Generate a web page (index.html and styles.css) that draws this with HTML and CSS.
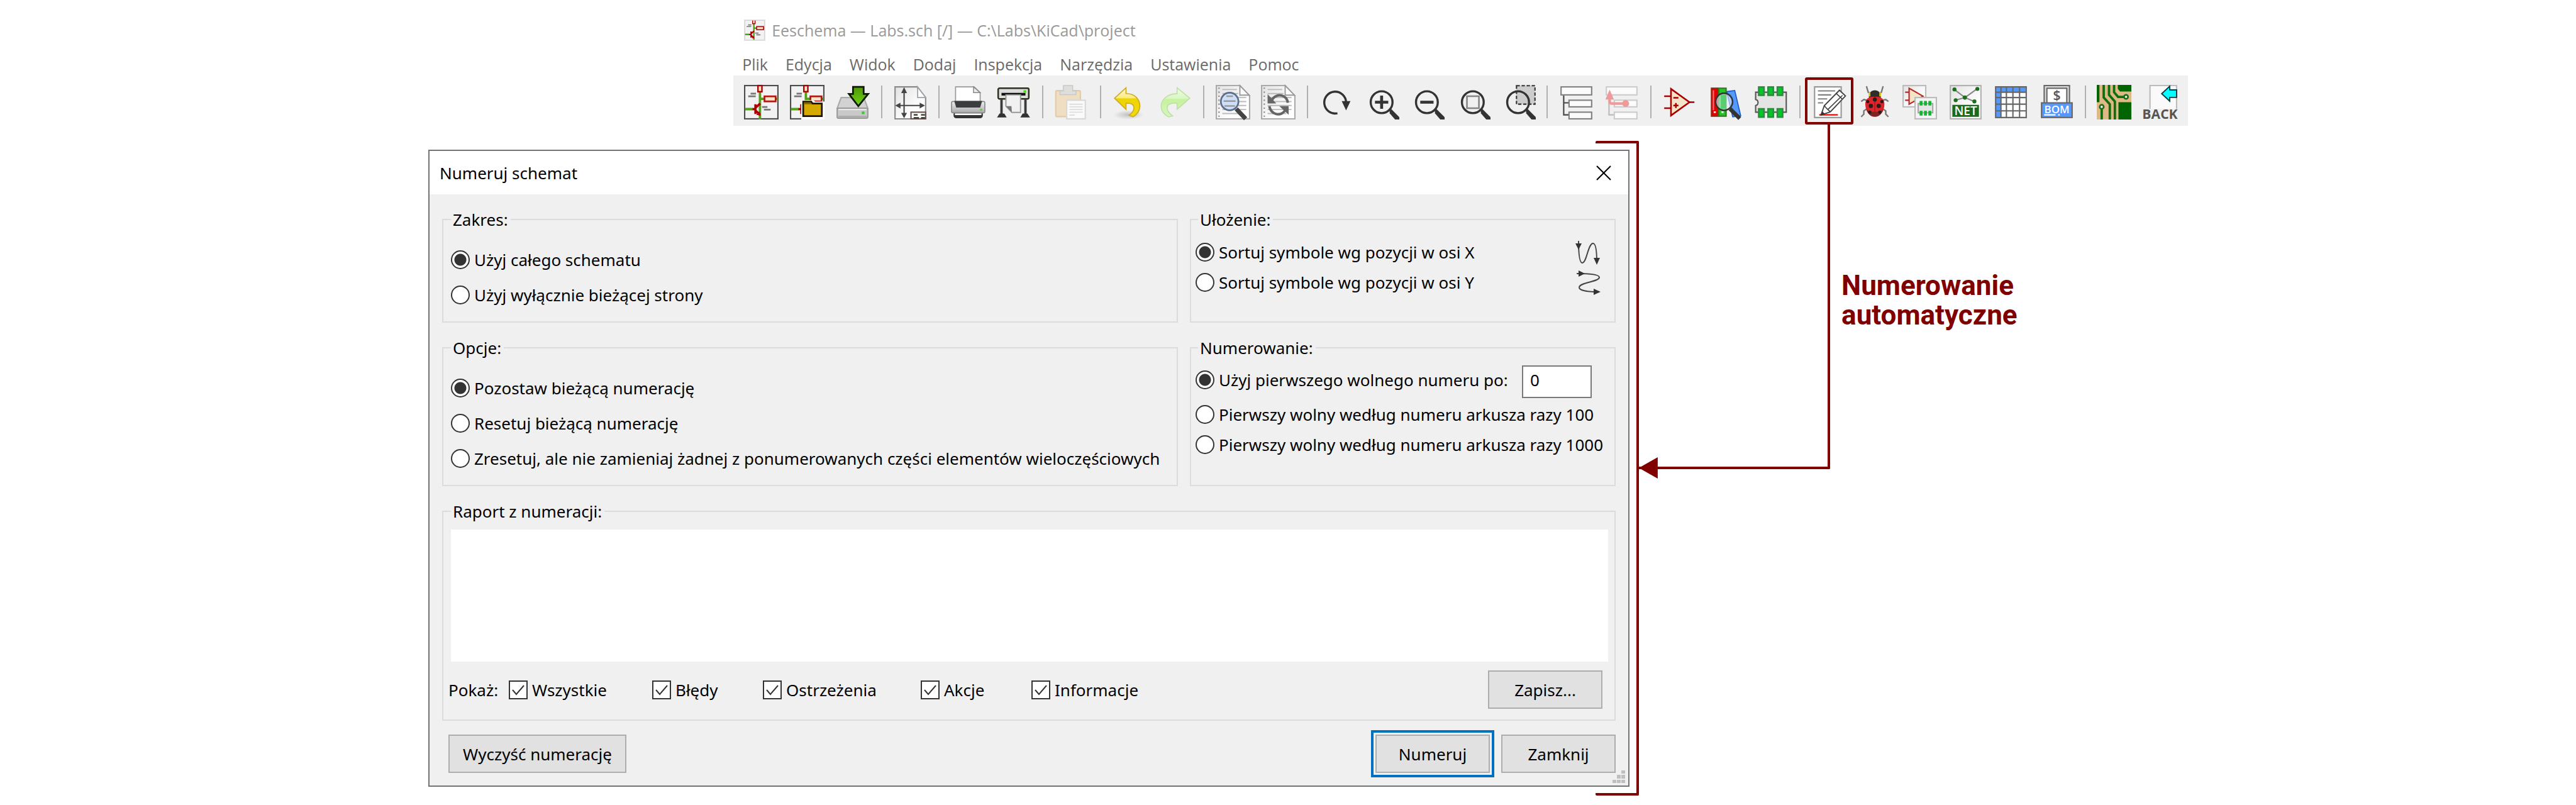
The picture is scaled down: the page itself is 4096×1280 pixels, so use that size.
FILE: index.html
```html
<!DOCTYPE html>
<html lang="pl">
<head>
<meta charset="utf-8">
<title>Numerowanie automatyczne</title>
<link rel="stylesheet" href="styles.css">
</head>
<body>
<svg class="defs" aria-hidden="true">
  <defs>
    <linearGradient id="g-paper" x1="0" y1="0" x2="1" y2="1"><stop offset="0" stop-color="#e2e2e2"/><stop offset=".7" stop-color="#fff"/></linearGradient>
    <linearGradient id="g-green" x1="0" y1="0" x2="0" y2="1"><stop offset="0" stop-color="#4e9a06"/><stop offset="1" stop-color="#73d216"/></linearGradient>
    <linearGradient id="g-yellow" x1="0" y1="0" x2="0" y2="1"><stop offset="0" stop-color="#fffbd0"/><stop offset=".34" stop-color="#fbec80"/><stop offset=".38" stop-color="#edd400"/><stop offset="1" stop-color="#f0dc10"/></linearGradient>
    <linearGradient id="g-lime" x1="0" y1="0" x2="0" y2="1"><stop offset="0" stop-color="#edfce2"/><stop offset=".36" stop-color="#d9f7c4"/><stop offset=".4" stop-color="#c6f29e"/><stop offset="1" stop-color="#d6f7bc"/></linearGradient>
    <linearGradient id="g-metal" x1="0" y1="0" x2="0" y2="1"><stop offset="0" stop-color="#eee"/><stop offset="1" stop-color="#aaa"/></linearGradient>
    <radialGradient id="g-shadow"><stop offset="0" stop-color="#000" stop-opacity=".2"/><stop offset="1" stop-color="#000" stop-opacity="0"/></radialGradient>
    <g id="sch">
      <rect x=".5" y=".5" width="25" height="25" fill="#f2f2f2" stroke="#4d4d4d"/>
      <path d="M12 5v21M12 10.5h4M23 10.5h2.5M.8 18.2h6" stroke="#55a019" stroke-width="1.8" fill="none"/>
      <rect x="10.5" y=".5" width="3" height="4.6" fill="#f5e4c8" stroke="#a80000" stroke-width="1.1"/>
      <rect x="15.4" y="8.6" width="8.4" height="3.8" fill="#f5e4c8" stroke="#b01818" stroke-width="1.3"/>
      <path d="M5 6.6h4M3.2 8.6h5.6M13.6 16.6h4M15 18.6h5" stroke="#777" stroke-width="1.3"/>
      <path d="M8.6 14.5v7.4M6.4 18.2h2M8.8 17l3.4-3M8.8 19.4l3.2 3" stroke="#a80000" stroke-width="1.7" fill="none"/>
      <path d="M12.6 23.2l-3.4-.8 2.4-2.6z" fill="#a80000"/>
    </g>
    <g id="sheet">
      <path d="M.5.5h17.7l7.3 7.8v17.2H.5z" fill="url(#g-paper)" stroke="#aaa"/>
      <path d="M18.2.5v7.2h7z" fill="#fff" stroke="#999" stroke-width=".9"/>
      <path d="M2.5 2v23" stroke="#888" stroke-width="1" stroke-dasharray="1 2"/>
      <path d="M5 3.5h11M5 6.500h12M5 9.500h18M5 12.500h18M5 15.500h18M5 18.500h18M5 21.500h14" stroke="#bbb" stroke-width=".9"/>
    </g>
    <g id="lens">
      <circle cx="12.700" cy="13" r="8.200" fill="none" stroke="#333" stroke-width="1.600"/>
      <path d="M18.600 19l1.400-.800 6 6v1.800h-3.200l-4-4.600z" fill="#333"/>
    </g>
  </defs>
</svg>

<main class="page">
  <section class="editor" aria-label="Eeschema">
    <header class="editor-title">
      <svg class="app-icon" viewBox="0 0 26 26" aria-hidden="true"><use href="#sch"/><rect x=".5" y=".5" width="25" height="25" fill="none" stroke="#e2e2e2" stroke-width="1.500"/></svg>
      <h1>Eeschema — Labs.sch [/] — C:\Labs\KiCad\project</h1>
    </header>
    <nav class="menu">
      <a href="#">Plik</a><a href="#">Edycja</a><a href="#">Widok</a><a href="#">Dodaj</a><a href="#">Inspekcja</a><a href="#">Narzędzia</a><a href="#">Ustawienia</a><a href="#">Pomoc</a>
    </nav>
    <div class="toolbar" role="toolbar">
      <button class="tool" aria-label="Nowy schemat"><svg viewBox="0 0 26 26"><use href="#sch"/></svg></button>
      <button class="tool" aria-label="Otwórz"><svg viewBox="0 0 26 26"><use href="#sch"/><path d="M8.500 11.500h9l1.500 1h7V26H8.500z" fill="#fff"/><path d="M10 12.600h6l1 1.400h7v9.500H10z" fill="#d4aa00" stroke="#1a1400" stroke-width="1.300"/><path d="M10.600 13h5l1 1.500h-6z" fill="#806600"/></svg></button>
      <button class="tool" aria-label="Zapisz"><svg viewBox="0 0 26 26"><path d="M4.500 9.500h17l3 8h-23z" fill="#d2d2d2" stroke="#aaa"/><rect x="1.500" y="17.500" width="23" height="7.500" rx="1" fill="#c9c9c9" stroke="#999"/><path d="M2.500 18.500h21" stroke="#e8e8e8"/><path d="M2.500 23.700h21" stroke="#aaa"/><rect x="20" y="20" width="2" height="2" fill="#3c3"/><path d="M13.400 1.500h8v5.300h3.400L17.400 16 10.300 6.800h3.100z" fill="url(#g-green)" stroke="#0b1a00" stroke-width="1.300"/></svg></button>
      <span class="sep"></span>
      <button class="tool" aria-label="Ustawienia strony"><svg viewBox="0 0 26 26"><path d="M1.500 1.500h16.800l6.200 8v16h-23z" fill="url(#g-paper)" stroke="#8a8a8a"/><path d="M18.300 1.500c.4 4 .2 7 .2 8h6z" fill="#fff" stroke="#9aa4a8" stroke-width=".8"/><path d="M8.300 3v21M3 15.500h20" stroke="#444" stroke-width="1"/><path d="M8.300 1.800l2.200 4.400H6.100zM8.300 25l2.200-4H6.100zM1.600 15.500l4-2.200v4.400zM24 15.500l-4-2.200v4.400z" fill="#444"/><rect x="13.500" y="20.500" width="11" height="5" fill="#fff" stroke="#6b5050"/><path d="M15.500 22.500h3m2.500 0h3M15.500 24.700h4m1.500 0h3" stroke="#2a3320"/></svg></button>
      <span class="sep"></span>
      <button class="tool" aria-label="Drukuj"><svg viewBox="0 0 26 26"><path d="M3.500 13V1.500h14l4.500 4.300V13z" fill="#fff" stroke="#999" stroke-width=".8"/><path d="M17 1.500v4.300h5z" fill="#eee" stroke="#888" stroke-width=".7"/><rect x="2" y="20" width="22" height="5" rx="2" fill="#333"/><path d="M3 22h20" stroke="#fff" stroke-width="1.300"/><rect x=".5" y="12.500" width="25" height="8.500" rx="1" fill="url(#g-metal)" stroke="#8a8a8a" stroke-width=".8"/><path d="M2.500 12h21l-1.500 5H4z" fill="#3a3e3e"/><rect x="22" y="18" width="1.500" height="1.300" fill="#4d1"/></svg></button>
      <button class="tool" aria-label="Rysuj"><svg viewBox="0 0 26 26"><path d="M4 11v12M22 11v12" stroke="#3a3a3a" stroke-width="1.800"/><path d="M1.500 24l1.300-2h3l1.200 2zM19 24l1.200-2h3l1.300 2z" fill="#333" stroke="#333"/><rect x="1.500" y="2.500" width="23" height="8" rx="1" fill="#dcdcdc" stroke="#2e2e1e" stroke-width="1.200"/><rect x="4" y="6" width="18" height="2" fill="#111"/><rect x="20.500" y="4" width="2" height="2" fill="#4d1"/><path d="M7.300 7.500h11v13.200h-6.500L7.300 16z" fill="#f1f1f1" stroke="#999" stroke-width=".9"/><path d="M7.300 16h4.200l.3 4.700z" fill="#777"/></svg></button>
      <span class="sep"></span>
      <button class="tool" aria-label="Wklej"><svg viewBox="0 0 26 26"><rect x="1.300" y="4.300" width="18.500" height="19.500" rx="1" fill="#f0dec2" stroke="#e2cba8"/><path d="M7 .5h7v4h2.500v2.800h-12V4.500H7z" fill="#dededa" stroke="#c8c8c6" stroke-width=".7"/><rect x="9.500" y="11.500" width="14" height="14" fill="#fafafa" stroke="#d8d8d8"/><path d="M11.500 14.500h10M11.500 16.500h10M11.500 18.500h10M11.500 20.500h10M11.500 22.700h4" stroke="#ddd" stroke-width=".9"/></svg></button>
      <span class="sep"></span>
      <button class="tool" aria-label="Cofnij"><svg viewBox="0 0 26 26"><ellipse cx="12.500" cy="22.500" rx="11.500" ry="3.500" fill="url(#g-shadow)"/><path d="M2 10l8.600-7.800v4.300C17.500 6.500 21 11 21 16c0 3.500-2.300 6.300-5 8l-3.100-1.200c2.800-2 4-3.800 3.600-6.300-.4-2.200-2.600-3-5.900-2.700v4.600z" fill="url(#g-yellow)" stroke="#cfa92a" stroke-width=".8"/></svg></button>
      <button class="tool" aria-label="Ponów"><svg viewBox="0 0 26 26"><path d="M24 10l-9.500-7.800v4.500C7.500 6.500 2.500 11 2.500 16c0 3.500 2.300 6.300 5.500 8l3.100-.7c-2.800-2.200-4.400-4-4-6.800.4-2.200 3.600-3.200 7.400-2.700v4.600z" fill="url(#g-lime)" stroke="#bfe0a8" stroke-width=".8"/></svg></button>
      <span class="sep"></span>
      <button class="tool" aria-label="Znajdź"><svg viewBox="0 0 26 26"><use href="#sheet"/><circle cx="10.500" cy="12.500" r="6.600" fill="#cfdff8" stroke="#5c6e8c" stroke-width="1.300"/><path d="M8 8.500h5M6 12.200h9M6.500 15.800h8" stroke="#999" stroke-width="1.200"/><path d="M15.500 18l7 7.500" stroke="#444" stroke-width="3.300"/></svg></button>
      <button class="tool" aria-label="Zamień"><svg viewBox="0 0 26 26"><use href="#sheet"/><path d="M7.500 12.800c1.500-4 5-5.600 8-4.800 3 .8 4.400 3 4.700 5.500M18.700 18c-1.500 3.500-4.700 4.700-7.500 3.800-2.700-.8-4.400-3-4.900-5.800" fill="none" stroke="#666" stroke-width="1.900"/><path d="M5 7v7h6.500zM20.800 16h-7l7 6.500z" fill="#666"/></svg></button>
      <span class="sep"></span>
      <button class="tool" aria-label="Odśwież"><svg viewBox="0 0 26 26"><path d="M14 21.300a8.200 8.200 0 1 1 6.500-8" fill="none" stroke="#333" stroke-width="1.600"/><path d="M17.200 12.200h6.600l-3.300 7z" fill="#333"/></svg></button>
      <button class="tool" aria-label="Powiększ"><svg viewBox="0 0 26 26"><use href="#lens"/><path d="M12.700 8v10M7.700 13h10" stroke="#333" stroke-width="2.200"/></svg></button>
      <button class="tool" aria-label="Pomniejsz"><svg viewBox="0 0 26 26"><use href="#lens"/><path d="M7.700 13h10" stroke="#333" stroke-width="2.200"/></svg></button>
      <button class="tool" aria-label="Dopasuj"><svg viewBox="0 0 26 26"><use href="#lens"/><rect x="8.300" y="8.500" width="9" height="9" fill="none" stroke="#858585" stroke-width="1.200"/></svg></button>
      <button class="tool" aria-label="Powiększ zaznaczenie"><svg viewBox="0 0 26 26"><rect x="11.500" y=".6" width="13.900" height="13.900" fill="#ccc" stroke="#333" stroke-width="1" stroke-dasharray="2.500 1.300"/><use href="#lens"/></svg></button>
      <span class="sep"></span>
      <button class="tool" aria-label="Hierarchia"><svg viewBox="0 0 26 26"><path d="M3.500 8v14.500H8M3.500 13.500H8" stroke="#444" fill="none"/><g fill="#fbfbfb" stroke="#808080"><rect x="1.500" y="1.500" width="23" height="6"/><rect x="7.500" y="11.500" width="17" height="5"/><rect x="7.500" y="20.500" width="17" height="5"/></g></svg></button>
      <button class="tool" aria-label="Opuść arkusz"><svg viewBox="0 0 26 26"><path d="M3.500 8v14.500H8" stroke="#bbb" fill="none"/><g fill="#fbfbfb" stroke="#ccc"><rect x="1.500" y="1.500" width="23" height="6"/><rect x="7.500" y="11.500" width="17" height="5"/><rect x="7.500" y="20.500" width="17" height="5"/></g><path d="M4 10v2.500q0 1.500 1.500 1.500H16" stroke="#ef9a9a" stroke-width="1.900" fill="none"/><circle cx="16" cy="14" r="2.600" fill="#ef9a9a"/><path d="M4 3.500L7.200 11H.8z" fill="#ef9a9a"/></svg></button>
      <span class="sep"></span>
      <button class="tool" aria-label="Edytor symboli"><svg viewBox="0 0 26 26"><path d="M1.500 8.500h5M1.500 17.500h5M20 13h4.200" stroke="#a80000" stroke-width="1.200"/><path d="M6.600 3v20L20.500 13z" fill="#f5e4c8" stroke="#a80000" stroke-width="1.200"/><path d="M8.400 9.700h3.800M8.400 15.500h3.800M10.300 13.600v3.800" stroke="#a80000" stroke-width="1.200"/></svg></button>
      <button class="tool" aria-label="Przeglądarka bibliotek"><svg viewBox="0 0 26 26"><path d="M14 5l6-.8 4.500 19-6 .8z" fill="#5599ff" stroke="#1a5bc0" stroke-width=".8"/><rect x="2.500" y="2.500" width="5" height="21" fill="#e00000" stroke="#8e2a1c"/><rect x="8" y="2.500" width="5.500" height="21" fill="#2ac02a" stroke="#2f7a1c"/><path d="M4 4v15" stroke="#ff6a6a"/><path d="M4.200 20.500h1.600M10 20.500h1.600" stroke="#fff" stroke-width="1.300"/><circle cx="12" cy="12.700" r="6.400" fill="#e8eefc" fill-opacity=".6" stroke="#333" stroke-width="1.200"/><path d="M9.500 7.500h4v10.400h-4z" fill="#39c85a" fill-opacity=".7"/><path d="M16.500 18l7.300 7.300" stroke="#333" stroke-width="3"/></svg></button>
      <button class="tool" aria-label="Edytor footprintów"><svg viewBox="0 0 26 26"><path d="M1.700 5.500h23v15h-23v-5c2.400-.5 2.400-4 0-4.500z" fill="#e4e4e4" stroke="#555" stroke-width="1"/><g fill="#00c828" stroke="#35883f" stroke-width="1.200"><rect x="4" y="1.600" width="4" height="6.200"/><rect x="11" y="1.600" width="4" height="6.200"/><rect x="18" y="1.600" width="4" height="6.200"/><rect x="4" y="18" width="4" height="6.200"/><rect x="11" y="18" width="4" height="6.200"/><rect x="18" y="18" width="4" height="6.200"/></g></svg></button>
      <span class="sep"></span>
      <button class="tool marked" aria-label="Numeruj schemat"><svg viewBox="0 0 26 26"><path d="M2.500 1.500h20v23h-20z" fill="#fff" stroke="#999"/><path d="M5 4.500h13M5 7.500h10M5 10.500h7M5 13.500h4" stroke="#808080"/><path d="M6 22.500h14" stroke="#f00" stroke-width="1.100"/><path d="M7.400 22.600l2.400-7L21.200 4l4.500 4.300-11.400 12z" fill="#fff" stroke="#444" stroke-width=".9"/><path d="M9.800 15.600l1.700 2 2.800 2.700M18.800 6.400l4.600 4.300M12.500 18.500l11-10.700" fill="none" stroke="#444" stroke-width=".8"/><path d="M7 23l1-3.300 2.300 2z" fill="#333"/></svg></button>
      <button class="tool" aria-label="Test ERC"><svg viewBox="0 0 26 26"><path d="M7 1l1.300 4.500L11 7M19.500 1l-1.300 4.500L15.500 7M3 12.500l2-1.500 3 .6M23.500 12.500l-2-1.500-3 .6M3 24l2-2v-2.500l3-2M23.500 24l-2-2v-2.500l-3-2" fill="none" stroke="#777" stroke-width="1.100"/><path d="M8.800 9.500c0-4 2-5.500 4.500-5.500s4.500 1.500 4.500 5.500z" fill="#2e2e2a"/><path d="M9.300 5.600v3M17.300 5.600v3M11.600 9.600h3.400" stroke="#dcc020" stroke-width="1.300"/><path d="M13.300 9c4.200-.6 7.300 1.500 7.200 5.500-.2 5.500-3 9.400-7.200 9.400s-7-3.900-7.200-9.400C6 10.500 9.100 8.400 13.300 9z" fill="#d8262a"/><path d="M7 18.500c3 2.300 9.500 2.300 12.600 0-1.300 3.500-3.500 5.400-6.300 5.400S8.300 22 7 18.500z" fill="#7d2426"/><path d="M13.300 9v14.800" stroke="#a01418" stroke-width=".6"/><g fill="#2b1a1a"><circle cx="13.300" cy="11" r="1.500"/><circle cx="8" cy="12.500" r="1.200"/><circle cx="18.600" cy="12.500" r="1.200"/><circle cx="10.300" cy="15.800" r="1.600"/><circle cx="16.200" cy="15.800" r="1.600"/><circle cx="9.500" cy="20.500" r="1.200"/><circle cx="17" cy="20.500" r="1.200"/></g></svg></button>
      <button class="tool" aria-label="Przypisz footprinty"><svg viewBox="0 0 26 26"><rect x=".5" y=".5" width="17" height="16" fill="url(#g-paper)" stroke="#bbb"/><path d="M2 5.500h3M2 11.500h3" stroke="#b82a2a"/><path d="M5 2.500v12l10.500-6z" fill="#f5e4c8" stroke="#b82a2a"/><rect x="9.500" y="9.500" width="16" height="16" fill="#f4f4f4" stroke="#bbb"/><rect x="11.800" y="14" width="11" height="7" fill="#e4e4e4" stroke="#999" stroke-width=".8"/><path d="M14 12v3.500M17.300 12v3.500M20.600 12v3.500M14 19.500V23M17.300 19.500V23M20.600 19.500V23" stroke="#12b432" stroke-width="2.200"/></svg></button>
      <button class="tool" aria-label="Generuj listę sieci"><svg viewBox="0 0 26 26"><rect x="1.500" y=".5" width="23" height="25" fill="url(#g-paper)" stroke="#b0b0b0"/><path d="M4.500 3.500l8 6 9-6.500M5.500 11.500l7-2 7 3" fill="none" stroke="#888"/><g fill="#1a701a"><circle cx="4.600" cy="3.400" r="1.500"/><circle cx="21.800" cy="3" r="1.500"/><circle cx="12.400" cy="9.500" r="1.600"/><circle cx="5.500" cy="11.500" r="1.500"/><circle cx="19.600" cy="12.400" r="1.500"/></g><rect x="3" y="15" width="20" height="9" fill="#1a6a1a"/><text class="glyph" x="13" y="22.700" font-size="9" fill="#fff" text-anchor="middle">NET</text></svg></button>
      <button class="tool" aria-label="Edytor pól"><svg viewBox="0 0 26 26"><rect x="1.500" y="1.500" width="23" height="23" fill="#fff"/><path d="M1.500 1.500h23v4H5.500v19h-4z" fill="#5599ff"/><path d="M1.500 1.500h23v23h-23zM5.500 1.500v23M9.600 1.500v23M14.500 1.500v23M19.500 1.500v23M1.500 5.500h23M1.500 9.500h23M1.500 14.500h23M1.500 19.500h23" fill="none" stroke="#666"/></svg></button>
      <button class="tool" aria-label="Lista materiałowa"><svg viewBox="0 0 26 26"><rect x="3.500" y=".5" width="19" height="14" fill="#e2e2e2" stroke="#666"/><rect x="5.500" y="2.500" width="15" height="12" fill="#fff" stroke="#666"/><text class="glyph" x="13" y="11.500" font-size="10" fill="#555" text-anchor="middle">$</text><rect x="1.500" y="13.500" width="23" height="11" fill="#5599ff" stroke="#666"/><text class="glyph" x="13" y="21.200" font-size="8" fill="#fff" text-anchor="middle">BOM</text><path d="M3.500 22.500H12M14 22.500h1.200" stroke="#fff"/></svg></button>
      <span class="sep"></span>
      <button class="tool" aria-label="Edytor PCB"><svg viewBox="0 0 26 26"><rect width="26" height="26" fill="#deb887"/><path d="M0 0h2v13H0zM15.800 0H26v5H17.500L15.800 3zM16.300 13H26v13h-9.700z" fill="#006400"/><path d="M5.200 0v9.500l4.600 5V26M9.200 0v7.500l4.400 5V26M13 0v5.500L16 9h5M3.700 17v9" fill="none" stroke="#126e0c" stroke-width="1.800"/><circle cx="22" cy="9" r="1.500" fill="#fff" stroke="#1a701a" stroke-width="1.300"/><circle cx="3.700" cy="16.500" r="1.500" fill="#fff" stroke="#1a701a" stroke-width="1.300"/></svg></button>
      <button class="tool" aria-label="Wstecz"><svg viewBox="0 0 26 26"><path d="M5.500 18V.5h20V18" fill="#fafafa" stroke="#bbb"/><path d="M14.300 6.600l6-5.600v2.800h5.200v5.600h-5.200v2.800z" fill="#0ff" stroke="#083c40" stroke-width=".9"/><text class="glyph back" x="13" y="25.600" font-size="10" fill="#555" text-anchor="middle">BACK</text></svg></button>
    </div>
  </section>

  <section class="scene">
    <form class="dialog" aria-labelledby="dialog-title">
      <header class="dialog-title">
        <h2 id="dialog-title">Numeruj schemat</h2>
        <button type="button" class="close" aria-label="Zamknij okno"><svg viewBox="0 0 24 24"><path d="M1 1l22 22M23 1L1 23" stroke="#000" stroke-width="2"/></svg></button>
      </header>
      <div class="dialog-body">
        <div class="groups">
          <fieldset class="roomy">
            <legend>Zakres:</legend>
            <label class="choice"><input type="radio" name="scope" checked>Użyj całego schematu</label>
            <label class="choice"><input type="radio" name="scope">Użyj wyłącznie bieżącej strony</label>
          </fieldset>
          <fieldset class="tight">
            <legend>Ułożenie:</legend>
            <div class="line">
              <label class="choice"><input type="radio" name="order" checked>Sortuj symbole wg pozycji w osi X</label>
              <svg class="order-icon" viewBox="0 0 40 40"><path d="M5 2c0 18 1 35 6 35C18 37 20 6 28 6c5 0 6 15 6 30" fill="none" stroke="#444" stroke-width="2"/><path d="M0 6h10L5 16zM29 29h10l-5 11z" fill="#333"/></svg>
            </div>
            <div class="line">
              <label class="choice"><input type="radio" name="order">Sortuj symbole wg pozycji w osi Y</label>
              <svg class="order-icon" viewBox="0 0 40 40"><path d="M2 6c18 0 36 1 36 6C38 19 6 20 6 28c0 5 15 7 30 7" fill="none" stroke="#444" stroke-width="2"/><path d="M5 1v10l10-5zM29 30v10l11-5z" fill="#333"/></svg>
            </div>
          </fieldset>
          <fieldset class="roomy">
            <legend>Opcje:</legend>
            <label class="choice"><input type="radio" name="mode" checked>Pozostaw bieżącą numerację</label>
            <label class="choice"><input type="radio" name="mode">Resetuj bieżącą numerację</label>
            <label class="choice"><input type="radio" name="mode">Zresetuj, ale nie zamieniaj żadnej z ponumerowanych części elementów wieloczęściowych</label>
          </fieldset>
          <fieldset class="tight">
            <legend>Numerowanie:</legend>
            <div class="start">
              <label class="choice"><input type="radio" name="start" checked>Użyj pierwszego wolnego numeru po:</label>
              <input class="number" type="text" value="0" aria-label="Pierwszy numer">
            </div>
            <label class="choice"><input type="radio" name="start">Pierwszy wolny według numeru arkusza razy 100</label>
            <label class="choice"><input type="radio" name="start">Pierwszy wolny według numeru arkusza razy 1000</label>
          </fieldset>
        </div>
        <fieldset class="report">
          <legend>Raport z numeracji:</legend>
          <textarea aria-label="Raport z numeracji" readonly></textarea>
          <div class="filters">
            <span>Pokaż:</span>
            <label class="choice"><input type="checkbox" checked>Wszystkie</label>
            <label class="choice"><input type="checkbox" checked>Błędy</label>
            <label class="choice"><input type="checkbox" checked>Ostrzeżenia</label>
            <label class="choice"><input type="checkbox" checked>Akcje</label>
            <label class="choice"><input type="checkbox" checked>Informacje</label>
            <button type="button" class="btn">Zapisz...</button>
          </div>
        </fieldset>
        <footer class="actions">
          <button type="button" class="btn wide">Wyczyść numerację</button>
          <button type="button" class="btn primary">Numeruj</button>
          <button type="button" class="btn">Zamknij</button>
        </footer>
      </div>
      <svg class="grip" viewBox="0 0 20 20" aria-hidden="true"><path d="M14 0h6v5h-6zM7 7h6v6H7zM14 7h6v6h-6zM0 15h6v5H0zM7 15h6v5H7zM14 15h6v5h-6z" fill="#bfbfbf"/></svg>
      <span class="bracket"></span>
    </form>
    <p class="note">Numerowanie<br>automatyczne</p>
  </section>
  <span class="connector"></span>
</main>
</body>
</html>
```
FILE: styles.css
```css
* { box-sizing: border-box; }

:root {
  --mark: #800000;
  --face: #f0f0f0;
}

body {
  margin: 0;
  background: #fff;
  color: #000;
  font-family: "Noto Sans", "Open Sans", sans-serif;
  font-size: 26px;
  line-height: 36px;
}

h1, h2, p { margin: 0; font-size: inherit; font-weight: 400; }
button, input, textarea { font: inherit; color: inherit; margin: 0; }
svg { display: block; }
.defs { position: absolute; width: 0; height: 0; }

.page { position: relative; overflow: hidden; }

/* Schematic editor strip */
.editor {
  margin-left: 28.47%;
  width: 56.47%;
  padding-top: 28px;
  font-family: "Open Sans", "Noto Sans", sans-serif;
  font-size: 25px;
}
.editor-title {
  display: flex;
  align-items: center;
  gap: 10px;
  height: 40px;
  padding-left: 17px;
  color: #999;
  white-space: nowrap;
}
.app-icon { width: 34px; height: 34px; }
.menu {
  display: flex;
  gap: 28px;
  padding: 16px 14px 0;
  height: 52px;
}
.menu a { color: #6a6a6a; text-decoration: none; }

.toolbar {
  display: flex;
  justify-content: space-between;
  align-items: center;
  height: 80px;
  padding: 4px 17px 0;
  background: var(--face);
}
.tool {
  position: relative;
  flex: none;
  width: 55px;
  height: 55px;
  padding: 0;
  border: 0;
  background: none;
}
.tool svg { width: 55px; height: 55px; overflow: visible; }
.sep { width: 2px; height: 52px; background: #b0b0b0; }
.glyph { font-family: "Open Sans", sans-serif; font-weight: 600; }
.back { font-weight: 700; }
.marked::after {
  content: "";
  position: absolute;
  inset: -12px -12px -8px -10px;
  border: 4px solid var(--mark);
  border-radius: 3px;
}

/* Dialog and its note */
.scene {
  display: grid;
  grid-template-columns: 681fr 1910fr 1505fr;
  padding: 38px 0 28px;
}
.dialog {
  position: relative;
  grid-column: 2;
  min-width: 0;
  border: 2px solid #737373;
  background: var(--face);
  white-space: nowrap;
}
.dialog-title {
  display: flex;
  align-items: center;
  justify-content: space-between;
  height: 69px;
  padding: 0 27px 0 16px;
  background: #fff;
}
.close { padding: 0; border: 0; background: none; }
.close svg { width: 24px; height: 24px; }
.dialog-body { padding: 22px 20px 20px; }

.groups {
  display: grid;
  grid-template-columns: 1170fr 677fr;
  column-gap: 19px;
  row-gap: 22px;
}
fieldset {
  min-width: 0;
  margin: 0;
  padding: 0;
  border: 2px solid #dcdcdc;
}
legend { padding: 0 4px 0 3px; }
.roomy { padding: 18px 12px 14px; }
.tight { padding: 10px 22px 14px 7px; }
.tight legend { margin-left: 4px; }

.choice { display: flex; align-items: center; gap: 7px; }
.roomy .choice { height: 56px; }
.tight .choice { height: 48px; }
.line { display: flex; justify-content: space-between; align-items: center; }
.order-icon { width: 40px; height: 40px; }
.start {
  display: flex;
  justify-content: space-between;
  height: 54px;
  padding-right: 14px;
}
.start .choice { height: 46px; }

input[type="radio"], input[type="checkbox"] {
  appearance: none;
  flex: none;
  width: 30px;
  height: 30px;
  border: 2px solid #333;
  background: #fff;
}
input[type="radio"] { border-radius: 50%; }
input[type="radio"]:checked {
  background: radial-gradient(circle, #333 9px, #fff 10px);
}
input[type="checkbox"]:checked {
  background: #fff url("data:image/svg+xml,%3Csvg xmlns='http://www.w3.org/2000/svg' viewBox='0 0 26 26'%3E%3Cpath d='M4 13l6 7L22 6' fill='none' stroke='%23333' stroke-width='2'/%3E%3C/svg%3E") center / 26px 26px no-repeat;
}
.number {
  width: 111px;
  height: 52px;
  padding: 0 11px 6px;
  border: 2px solid #7a7a7a;
  background: #fff;
}

.report { margin-top: 22px; padding: 11px 8px 17px 8px; }
.report legend { margin-left: 4px; }
.report textarea {
  display: block;
  width: calc(100% - 6px);
  height: 210px;
  margin: 0 3px 0 4px;
  border: 0;
  background: #fff;
  resize: none;
}
.filters {
  display: grid;
  grid-template-columns: 96px 228px 176px 251px 176px 1fr auto;
  align-items: center;
  margin-top: 14px;
  padding-right: 11px;
}
.btn {
  width: 182px;
  height: 61px;
  padding: 0;
  border: 2px solid #adadad;
  background: #e1e1e1;
  text-align: center;
}
.actions {
  display: flex;
  gap: 18px;
  margin-top: 22px;
  padding-left: 10px;
}
.wide { width: 283px; margin-right: auto; }
.primary { outline: 4px solid #0070c0; outline-offset: 3px; }
.grip { position: absolute; right: 5px; bottom: 4px; width: 20px; height: 20px; }

/* Callout lines */
.bracket {
  position: absolute;
  top: -16px;
  right: -17px;
  bottom: -16px;
  width: 69px;
  border: 4px solid var(--mark);
  border-left: 0;
  border-radius: 2px;
}
.connector {
  position: absolute;
  left: 63.62%;
  right: 28.95%;
  top: 197px;
  height: 549px;
  border: solid var(--mark);
  border-width: 0 4px 4px 0;
  border-radius: 0 0 2px 0;
}
.connector::before {
  content: "";
  position: absolute;
  left: 0;
  bottom: -19px;
  width: 30px;
  height: 34px;
  background: var(--mark);
  clip-path: polygon(0 50%, 100% 0, 100% 100%);
}
.note {
  padding: 193px 0 0 22.400%;
  color: var(--mark);
  font: 700 44px/47px Roboto, sans-serif;
}
```
